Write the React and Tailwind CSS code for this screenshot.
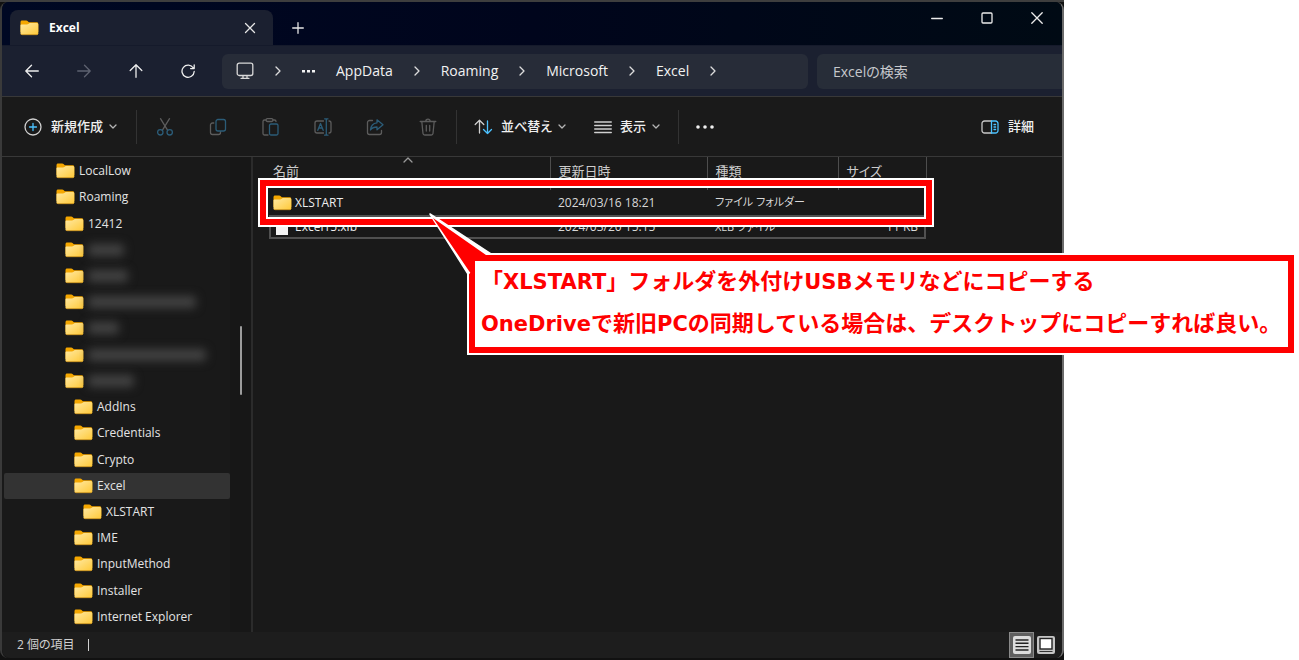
import React from "react";

const FONT =
  "font-['Open_Sans','Noto_Sans_CJK_JP',sans-serif] [font-feature-settings:'palt']";

function Folder() {
  return (
    <svg width="19" height="16" viewBox="0 0 19 16" className="shrink-0" aria-hidden="true">
      <defs>
        <linearGradient id="folderFront" x1="0" y1="0" x2="1" y2="1">
          <stop offset="0" stopColor="#ffe9a3" />
          <stop offset="1" stopColor="#ffc938" />
        </linearGradient>
      </defs>
      <path d="M.5 2.2C.5 1.3 1.200.6 2.100.6H6.300c.5 0 .9.2 1.200.5L8.800 2.300H16.600c1 0 1.700.7 1.700 1.600V12H.5z" fill="#f5a700" />
      <path d="M.5 5.600C.5 5 1 4.600 1.600 4.600H7c.5 0 .9-.2 1.300-.5l.8-.7c.3-.3.7-.4 1.100-.4h6.500c.9 0 1.600.7 1.600 1.600v8.600c0 .9-.7 1.600-1.600 1.600H2.100c-.9 0-1.600-.7-1.600-1.600z" fill="url(#folderFront)" />
      <path d="M.7 13.600c.2.700.800 1.100 1.400 1.100h14.600c.6 0 1.200-.4 1.400-1.100" fill="none" stroke="#d99a1a" strokeWidth=".7" />
    </svg>
  );
}

function Icon({ w = 18, h = 18, children, className = "" }) {
  return (
    <svg
      width={w}
      height={h}
      viewBox={`0 0 ${w} ${h}`}
      fill="none"
      stroke="currentColor"
      strokeWidth="1.3"
      strokeLinecap="round"
      strokeLinejoin="round"
      className={`shrink-0 ${className}`}
      aria-hidden="true"
    >
      {children}
    </svg>
  );
}

const ChevronRight = () => (
  <Icon w={6} h={10} className="text-[#dddddd]">
    <path d="M1 1l4 4-4 4" />
  </Icon>
);

const ChevronDown = () => (
  <Icon w={8} h={6} className="text-[#b5b5b5]">
    <path d="M1 1l3 3 3-3" />
  </Icon>
);

const Separator = () => <div className="h-[34px] w-px shrink-0 bg-[#333333]" />;

function TitleBar() {
  return (
    <header className="flex h-[43px] shrink-0 bg-linear-to-r from-[#000823] via-[#00051c] to-[#000a14] pl-2">
      <div className="mt-2 flex w-[263px] items-center rounded-t-lg bg-[#1b2030] pl-[10px] pr-[13px]">
        <Folder />
        <span className="ml-[10px] flex-1 text-xs font-bold text-white">Excel</span>
        <button type="button" aria-label="タブを閉じる" className="flex size-5 items-center justify-center text-[#e6e6e6]">
          <Icon w={12} h={12}><path d="M1.500 1.500l9 9M10.500 1.500l-9 9" /></Icon>
        </button>
      </div>
      <button type="button" aria-label="新しいタブ" className="mt-2 flex w-[50px] items-center justify-center text-[#e6e6e6]">
        <Icon w={12} h={12}><path d="M6 .700v10.600M.700 6h10.600" /></Icon>
      </button>
      <div className="ml-auto flex h-[31px] text-[#ececec]">
        <button type="button" aria-label="最小化" className="flex w-[50px] items-center justify-center">
          <Icon w={12} h={12}><path d="M.700 6.500h10.600" /></Icon>
        </button>
        <button type="button" aria-label="最大化" className="flex w-[50px] items-center justify-center">
          <Icon w={12} h={12}><rect x="1" y="1" width="10" height="10" rx="1" /></Icon>
        </button>
        <button type="button" aria-label="閉じる" className="flex w-[50px] items-center justify-center">
          <Icon w={12} h={12}><path d="M.800.800l10.400 10.400M11.200.800L.800 11.200" /></Icon>
        </button>
      </div>
    </header>
  );
}

const crumbs = ["AppData", "Roaming", "Microsoft", "Excel"];

function NavButton({ label, dim, children }) {
  return (
    <button
      type="button"
      aria-label={label}
      className={`flex h-9 w-[52px] items-center justify-center ${dim ? "text-[#5e6270]" : "text-[#eeeeee]"}`}
    >
      <Icon w={14} h={14}>{children}</Icon>
    </button>
  );
}

function NavBar() {
  return (
    <nav className="flex h-[51px] shrink-0 items-center border-t border-[#151a2b] bg-[#1b2030] pl-1">
      <NavButton label="戻る"><path d="M13.300 7H.8M6.500 1.200L.8 7l5.700 5.800" /></NavButton>
      <NavButton label="進む" dim><path d="M.700 7h12.500M7.500 1.200L13.200 7l-5.700 5.800" /></NavButton>
      <NavButton label="上へ"><path d="M7 13.300V.8M1.200 6.500L7 .8l5.800 5.700" /></NavButton>
      <NavButton label="最新の情報に更新">
        <path d="M12.300 4A6.100 6.100 0 1 0 13.200 7.500M13.200 1v3.600H9.600" />
      </NavButton>
      <div className="ml-2 flex h-[35px] flex-1 items-center gap-[21px] rounded-md bg-[#272c38] pl-[14px] text-sm text-[#f2f2f2]">
        <Icon w={18} h={18} className="text-[#d8d8d8]">
          <rect x="1.200" y="1.200" width="15.600" height="12.300" rx="2" />
          <path d="M7 14v2.300M11 14v2.300M5 16.300h8" />
        </Icon>
        <ChevronRight />
        <button type="button" aria-label="省略されたフォルダー">
          <Icon w={13} h={4}>
            <g fill="currentColor" stroke="none">
              <rect x="0" y="1" width="3" height="2.500" /><rect x="5" y="1" width="3" height="2.500" /><rect x="10" y="1" width="3" height="2.500" />
            </g>
          </Icon>
        </button>
        {crumbs.map((c) => (
          <React.Fragment key={c}>
            <a href="#" className="leading-5">{c}</a>
            <ChevronRight />
          </React.Fragment>
        ))}
      </div>
      <input
        type="search"
        aria-label="Excelの検索"
        placeholder="Excelの検索"
        className="ml-[9px] h-[35px] w-[245px] rounded-l-md bg-[#272d38] px-4 text-sm text-white placeholder:text-[#c6c8cc]"
      />
    </nav>
  );
}

function ToolButton({ label, children }) {
  return (
    <button type="button" aria-label={label} className="flex h-9 w-[52px] items-center justify-center text-[#5c5c5c]">
      <Icon>{children}</Icon>
    </button>
  );
}

const DIM_BLUE = "#2b5c78";
const BLUE = "#4cc2ff";

function ToolBar() {
  return (
    <div className="flex h-[61px] shrink-0 items-center border-y border-[#383838] bg-[#1a1a1a] pl-[22px] pr-[28px] text-[13px] font-medium text-[#f0f0f0]">
      <button type="button" className="mr-[19px] flex items-center">
        <Icon className="text-[#d0d0d0]">
          <circle cx="9" cy="9" r="8" />
          <path d="M9 5.500v7M5.500 9h7" stroke={BLUE} />
        </Icon>
        <span className="ml-[9px] mr-[6px]">新規作成</span>
        <ChevronDown />
      </button>
      <Separator />
      <div className="mx-[2px] flex w-[315px] justify-between">
        <ToolButton label="切り取り">
          <path d="M4.500.700l7.200 11.600M13.500.700L6.300 12.300" />
          <g stroke={DIM_BLUE}><circle cx="4.300" cy="14.300" r="2.700" /><circle cx="13.700" cy="14.300" r="2.700" /></g>
        </ToolButton>
        <ToolButton label="コピー">
          <path d="M4.800 5H3.500a2 2 0 0 0-2 2v7.500a2 2 0 0 0 2 2h6a2 2 0 0 0 2-2v-.8" />
          <rect x="7" y="1.500" width="9.500" height="11.500" rx="2" stroke={DIM_BLUE} />
        </ToolButton>
        <ToolButton label="貼り付け">
          <path d="M7 17H3.500a1.500 1.500 0 0 1-1.500-1.500v-12A1.500 1.500 0 0 1 3.500 2H5M12 2h1.500A1.500 1.500 0 0 1 15 3.500" />
          <rect x="5" y=".700" width="7" height="2.800" rx="1.400" />
          <rect x="8.500" y="6" width="8.500" height="11" rx="1.500" stroke={DIM_BLUE} />
        </ToolButton>
        <ToolButton label="名前の変更">
          <path d="M9.500 3H3a2 2 0 0 0-2 2v8a2 2 0 0 0 2 2h6.500M15 3a2 2 0 0 1 2 2v8a2 2 0 0 1-2 2" />
          <path d="M3.800 12.300L6.500 5.500l2.700 6.800M4.800 10h3.400M12.300 1v16M10.600.800h3.400M10.600 17.200h3.400" stroke={DIM_BLUE} />
        </ToolButton>
        <ToolButton label="共有">
          <path d="M6.500 2.500H3.500a2 2 0 0 0-2 2v10a2 2 0 0 0 2 2h10a2 2 0 0 0 2-2V12.500" />
          <path d="M11 1.800l6 5-6 5V9c-3 0-5 .800-6.500 3 .3-4 2.500-6.800 6.500-7.200z" stroke={DIM_BLUE} />
        </ToolButton>
        <ToolButton label="削除">
          <path d="M1.200 3.500h15.600M6.800 3.300a2.200 2.200 0 0 1 4.400 0M2.800 3.500l1.200 12a1.700 1.700 0 0 0 1.700 1.500h6.600a1.700 1.700 0 0 0 1.700-1.500l1.200-12M7.300 7.500v5.500M10.700 7.500v5.500" />
        </ToolButton>
      </div>
      <Separator />
      <button type="button" className="mx-[17px] flex items-center">
        <Icon w={19} className="text-[#d0d0d0]">
          <path d="M5.500 15V2.500M1.200 6.500l4.300-4.300 4.300 4.300" />
          <path d="M13.500 3v12.500M9.500 11.500l4 4 4-4" stroke={BLUE} />
        </Icon>
        <span className="ml-[8px] mr-[6px]">並べ替え</span>
        <ChevronDown />
      </button>
      <button type="button" className="ml-[11px] mr-[18px] flex items-center">
        <Icon className="text-[#d0d0d0]">
          <path d="M.700 4h16.600M.700 7.500h16.600M.700 11h16.600M.700 14.500h16.600" />
        </Icon>
        <span className="ml-[8px] mr-[6px]">表示</span>
        <ChevronDown />
      </button>
      <Separator />
      <button type="button" aria-label="もっと見る" className="ml-[17px]">
        <Icon w={18} h={4}>
          <g fill="currentColor" stroke="none"><circle cx="2" cy="2" r="1.800" /><circle cx="9" cy="2" r="1.800" /><circle cx="16" cy="2" r="1.800" /></g>
        </Icon>
      </button>
      <button type="button" className="ml-auto flex items-center gap-[9px]">
        <Icon w={18} h={14} className="text-[#c8c8c8]">
          <path d="M10.500 1H3.500a2.500 2.500 0 0 0-2.500 2.500v7A2.500 2.500 0 0 0 3.500 13h7" />
          <path d="M10.500 1H14.500A2.500 2.500 0 0 1 17 3.500v7a2.500 2.500 0 0 1-2.500 2.500h-4zM13 4.500h1.600M13 7h1.600M13 9.500h1.600" stroke={BLUE} />
        </Icon>
        <span>詳細</span>
      </button>
    </div>
  );
}

const tree = [
  { name: "LocalLow", pad: "pl-[52px]" },
  { name: "Roaming", pad: "pl-[52px]" },
  { name: "12412", pad: "pl-[61px]" },
  { hidden: "w-[36px]", pad: "pl-[61px]" },
  { hidden: "w-[40px]", pad: "pl-[61px]" },
  { hidden: "w-[108px]", pad: "pl-[61px]" },
  { hidden: "w-[31px]", pad: "pl-[61px]" },
  { hidden: "w-[118px]", pad: "pl-[61px]" },
  { hidden: "w-[46px]", pad: "pl-[61px]" },
  { name: "AddIns", pad: "pl-[70px]" },
  { name: "Credentials", pad: "pl-[70px]" },
  { name: "Crypto", pad: "pl-[70px]" },
  { name: "Excel", pad: "pl-[70px]", selected: true },
  { name: "XLSTART", pad: "pl-[79px]" },
  { name: "IME", pad: "pl-[70px]" },
  { name: "InputMethod", pad: "pl-[70px]" },
  { name: "Installer", pad: "pl-[70px]" },
  { name: "Internet Explorer", pad: "pl-[70px]" },
];

function Sidebar() {
  return (
    <aside className="relative flex w-[251px] shrink-0 border-r-2 border-[#2b2b2b] bg-[#171717]">
      <ul className="flex w-[228px] flex-col bg-[#191919] pb-[2px] pl-[2px] pt-px text-xs text-[#e4e4e4]">
        {tree.map((t, i) => (
          <li
            key={i}
            className={`flex min-h-[26px] flex-1 items-center gap-1 rounded-xs ${t.pad} ${t.selected ? "bg-[#333333]" : ""}`}
          >
            <Folder />
            {t.name ? (
              <span className="whitespace-nowrap">{t.name}</span>
            ) : (
              <span className={`h-3 rounded-sm bg-[#434343] blur-[5px] ${t.hidden}`} />
            )}
          </li>
        ))}
      </ul>
      <div className="absolute right-[9px] top-[169px] h-[69px] w-[2px] rounded-full bg-[#9c9c9c]" />
    </aside>
  );
}

function FileList() {
  return (
    <main className="relative min-w-0 flex-1 bg-[#191919]">
      <table className="ml-4 w-[657px] table-fixed border-collapse text-left text-xs text-[#d8d8d8]">
        <colgroup>
          <col className="w-[281px]" />
          <col className="w-[157px]" />
          <col className="w-[131px]" />
          <col className="w-[88px]" />
        </colgroup>
        <thead>
          <tr className="h-[33px] align-top text-[13px] leading-7 text-[#cccccc]">
            <th className="relative border-r border-[#4d4d4d] pl-1 font-normal">
              名前
              <Icon w={10} h={6} className="absolute left-[134px] top-0 text-[#9a9a9a]"><path d="M1 5l4-4 4 4" /></Icon>
            </th>
            <th className="border-r border-[#4d4d4d] pl-2 font-normal">更新日時</th>
            <th className="border-r border-[#4d4d4d] pl-2 font-normal">種類</th>
            <th className="border-r border-[#4d4d4d] pl-2 font-normal">サイズ</th>
          </tr>
        </thead>
        <tbody>
          <tr className="h-[25px]">
            <td className="pl-1">
              <span className="flex items-center gap-[3px] text-[#eeeeee]"><Folder />XLSTART</span>
            </td>
            <td className="pl-2">2024/03/16 18:21</td>
            <td className="whitespace-nowrap pl-2 text-[11px]">ファイル フォルダー</td>
            <td />
          </tr>
          <tr className="h-[24px] outline-2 -outline-offset-2 outline-[#505050]">
            <td className="pl-[7px]">
              <span className="flex items-center gap-[7px] text-[#eeeeee]">
                <span className="h-[15px] w-3 bg-[#f4f4f4]" />Excel15.xlb
              </span>
            </td>
            <td className="pl-2">2024/03/20 15:15</td>
            <td className="pl-2 text-[11px]">XLB ファイル</td>
            <td className="pr-2 text-right">11 KB</td>
          </tr>
        </tbody>
      </table>
      <div className="absolute left-[5px] top-[21px] h-[49px] w-[676px] border-2 border-white">
        <div className="h-full border-6 border-[#ff0000]">
          <div className="h-full border-2 border-white" />
        </div>
      </div>
    </main>
  );
}

function StatusBar() {
  return (
    <footer className="flex h-[26px] shrink-0 items-center rounded-b-lg bg-[#1d1d1d] pl-[15px] pr-[7px] text-xs text-[#d0d0d0]">
      <span>2 個の項目</span>
      <span className="ml-[13px] h-3 w-px bg-[#d0d0d0]" />
      <button type="button" aria-label="詳細表示" className="ml-auto flex h-[26px] w-[25px] items-center justify-center border border-[#8a8a8a] bg-[#5f5f5f]">
        <svg width="18" height="18" viewBox="0 0 18 18" aria-hidden="true">
          <rect width="18" height="18" rx="2" fill="#dcdcdc" />
          <path d="M2.500 4h13M2.500 7.300h13M2.500 10.600h13M2.500 14h13" stroke="#222" strokeWidth="1.400" />
        </svg>
      </button>
      <button type="button" aria-label="大アイコン" className="ml-[3px] flex h-[26px] w-[18px] items-center justify-center">
        <svg width="18" height="18" viewBox="0 0 18 18" aria-hidden="true">
          <rect width="18" height="18" rx="2" fill="#c4c4c4" />
          <rect x="3" y="2.500" width="12" height="10.500" fill="#fff" stroke="#222" strokeWidth="1.400" />
          <path d="M2.500 15.500h13" stroke="#333" strokeWidth="1.200" />
        </svg>
      </button>
    </footer>
  );
}

const Latin = ({ children }) => <span className="text-[21px] leading-none">{children}</span>;

function Callout() {
  return (
    <div className="absolute left-[467px] right-[5px] top-[253px] border-2 border-r-0 border-white">
      <p className="whitespace-nowrap border-6 border-[#ff0000] bg-white px-[6px] pb-[2px] text-[22px] font-bold leading-[42px] text-[#ff0000] font-['DejaVu_Sans','Noto_Sans_CJK_JP',sans-serif] [font-feature-settings:normal]">
        「<Latin>XLSTART</Latin>」フォルダを外付け<Latin>USB</Latin>メモリなどにコピーする
        <br />
        <Latin>OneDrive</Latin>で新旧<Latin>PC</Latin>の同期している場合は、デスクトップにコピーすれば良い。
      </p>
      <svg width="66" height="64" viewBox="0 0 66 64" className="absolute left-[-40px] top-[-42px]" aria-hidden="true">
        <path d="M62 41L1 1L39 61L46 55V48H55z" fill="#fff" stroke="#fff" strokeWidth="1.500" strokeLinejoin="round" />
        <path d="M57 42L4 5L40 58L46 66V48H66V42z" fill="#ff0000" />
      </svg>
    </div>
  );
}

export default function App() {
  return (
    <div className={`relative min-h-screen bg-white pr-[235px] ${FONT}`}>
      <div className="flex min-h-screen flex-col border-y-2 border-t-[#3e3e3e] border-b-[#111111] bg-[#111111]">
        <div className="flex flex-1 flex-col overflow-hidden rounded-lg border-x-2 border-l-[#3a3a3a] border-r-[#6b6b6b]">
          <TitleBar />
          <NavBar />
          <ToolBar />
          <div className="flex flex-1">
            <Sidebar />
            <FileList />
          </div>
          <StatusBar />
        </div>
      </div>
      <Callout />
    </div>
  );
}
